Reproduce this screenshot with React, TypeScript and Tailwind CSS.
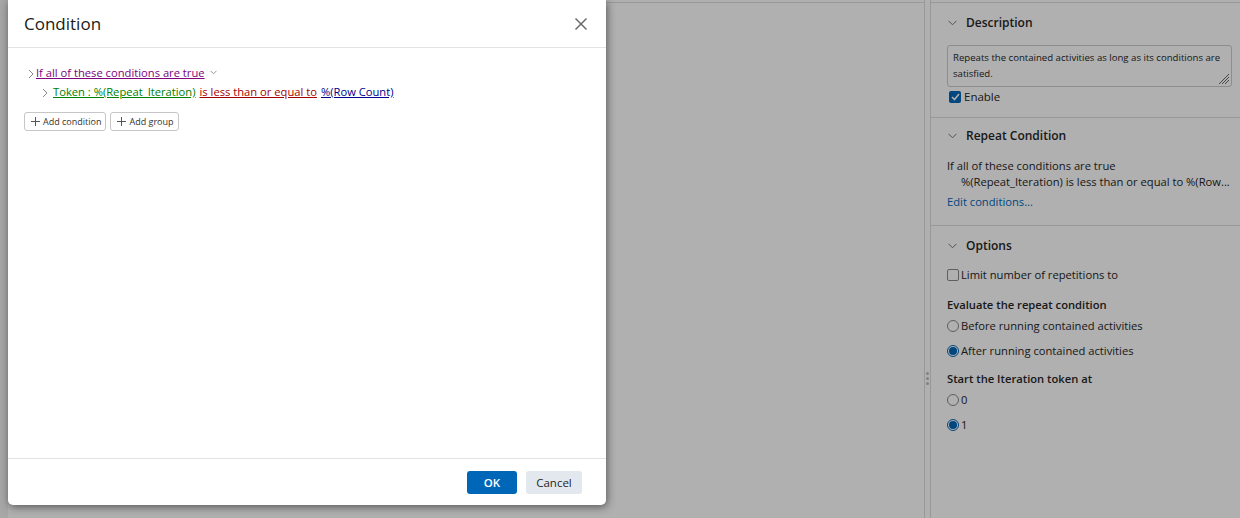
import React from "react";

const Chev = ({ className = "" }: { className?: string }) => (
  <svg width="9" height="6" viewBox="0 0 9 6" className={className} fill="none">
    <polyline points="0.5,0.8 4.5,4.8 8.5,0.8" stroke="#777" strokeWidth="1" />
  </svg>
);

const ChevRight = ({ className = "" }: { className?: string }) => (
  <svg width="6" height="10" viewBox="0 0 6 10" className={className} fill="none">
    <polyline points="1,1 5,5 1,9" stroke="#888" strokeWidth="1" />
  </svg>
);

const Plus = () => (
  <svg width="9" height="9" viewBox="0 0 9 9" fill="none">
    <line x1="4.5" y1="0" x2="4.5" y2="9" stroke="#555" strokeWidth="1" />
    <line x1="0" y1="4.5" x2="9" y2="4.5" stroke="#555" strokeWidth="1" />
  </svg>
);

const Radio = ({ checked }: { checked?: boolean }) =>
  checked ? (
    <span className="w-[12px] h-[12px] rounded-full border border-[#0067b8] flex items-center justify-center bg-white">
      <span className="w-[8px] h-[8px] rounded-full bg-[#0067b8]" />
    </span>
  ) : (
    <span className="w-[12px] h-[12px] rounded-full border border-[#8a8a8a] bg-white" />
  );

const SectionHeader = ({ title, h }: { title: string; h: string }) => (
  <div className={`flex items-center pl-[17px] ${h}`}>
    <Chev />
    <span className="ml-[9px] text-[12px] font-semibold text-[#262626]">{title}</span>
  </div>
);

export default function App() {
  return (
    <div className="relative w-[1240px] h-[518px] overflow-hidden bg-white font-['Open_Sans','Noto_Sans',sans-serif] text-[#262626]">
      <div className="flex h-full">
        <div className="w-[8px] bg-[#f2f2f2]" />
        <div className="flex-1 flex flex-col">
          <div className="h-[2px]" />
          <div className="flex-1 border-t border-[#dedede]" />
        </div>
        <div className="w-[7px] flex flex-col border-l border-r border-[#dcdcdc] bg-white">
          <div className="flex-1" />
          <div className="flex flex-col items-center gap-[2px] mb-[133px]">
            <span className="w-[3px] h-[3px] rounded-full bg-[#bbb]" />
            <span className="w-[3px] h-[3px] rounded-full bg-[#bbb]" />
            <span className="w-[3px] h-[3px] rounded-full bg-[#bbb]" />
          </div>
        </div>
        <div className="w-[309px] flex flex-col">
          <div className="h-[2px]" />
          <div className="border-t border-[#dedede] pb-[12px] border-b">
            <SectionHeader title="Description" h="h-[40px]" />
            <div className="ml-[16px] mr-[8px] mt-[2px] h-[42px] border border-[#cccccc] rounded-[3px] pl-[5px] pr-[4px] pt-[4px] text-[9.6px] leading-[16px] relative">
              Repeats the contained activities as long as its conditions are satisfied.
              <svg className="absolute right-[1px] bottom-[1px]" width="14" height="14" viewBox="0 0 14 14">
                <line x1="13" y1="3" x2="3" y2="13" stroke="#666" strokeWidth="1" />
                <line x1="13" y1="6" x2="6" y2="13" stroke="#666" strokeWidth="1" />
                <line x1="13" y1="9" x2="9" y2="13" stroke="#666" strokeWidth="1" />
              </svg>
            </div>
            <div className="mt-[2px] h-[16px] flex items-center pl-[18px]">
              <span className="w-[12px] h-[12px] rounded-[2px] bg-[#0067b8] flex items-center justify-center">
                <svg width="9" height="8" viewBox="0 0 9 8" fill="none">
                  <polyline points="1,4 3.5,6.5 8,1" stroke="white" strokeWidth="1.6" />
                </svg>
              </span>
              <span className="ml-[3px] text-[11.5px]">Enable</span>
            </div>
          </div>
          <div className="pb-[15px] border-b border-[#dedede]">
            <SectionHeader title="Repeat Condition" h="h-[36px]" />
            <div className="pl-[16px] mt-[4px] text-[11.2px] leading-[16px]">If all of these conditions are true</div>
            <div className="pl-[30px] text-[11.2px] leading-[16px] whitespace-nowrap overflow-hidden">
              %(Repeat_Iteration) is less than or equal to %(Row...
            </div>
            <div className="pl-[16px] mt-[4px] text-[11.2px] leading-[16px] text-[#0067b8]">Edit conditions...</div>
          </div>
          <div>
            <SectionHeader title="Options" h="h-[39px]" />
            <div className="pl-[16px] h-[20px] flex items-center text-[11.2px]">
              <span className="w-[12px] h-[12px] rounded-[2px] border border-[#8a8a8a] bg-white" />
              <span className="ml-[2px]">Limit number of repetitions to</span>
            </div>
            <div className="pl-[16px] mt-[12px] h-[16px] flex items-center text-[11.2px] font-semibold">
              Evaluate the repeat condition
            </div>
            <div className="pl-[16px] mt-[3px] h-[20px] flex items-center text-[11.2px]">
              <Radio />
              <span className="ml-[2px]">Before running contained activities</span>
            </div>
            <div className="pl-[16px] mt-[5px] h-[20px] flex items-center text-[11.2px]">
              <Radio checked />
              <span className="ml-[2px]">After running contained activities</span>
            </div>
            <div className="pl-[16px] mt-[10px] h-[16px] flex items-center text-[11.2px] font-semibold">
              Start the Iteration token at
            </div>
            <div className="pl-[16px] mt-[3px] h-[20px] flex items-center text-[11.2px]">
              <Radio />
              <span className="ml-[2px]">0</span>
            </div>
            <div className="pl-[16px] mt-[5px] h-[20px] flex items-center text-[11.2px]">
              <Radio checked />
              <span className="ml-[2px]">1</span>
            </div>
          </div>
        </div>
      </div>

      <div className="absolute inset-0 bg-black/[0.31]" />

      <div className="absolute left-[8px] top-0 w-[598px] h-[505px] bg-white rounded-b-[5px] shadow-[1px_2px_8px_rgba(0,0,0,0.5)] flex flex-col">
        <div className="h-[48px] border-b border-[#e3e3e3] flex items-center justify-between pl-[16px] pr-[19px]">
          <span className="text-[17px] font-[520] text-[#1a1a1a]">Condition</span>
          <svg width="12" height="12" viewBox="0 0 12 12">
            <line x1="0.5" y1="0.5" x2="11.5" y2="11.5" stroke="#666" strokeWidth="1.4" />
            <line x1="11.5" y1="0.5" x2="0.5" y2="11.5" stroke="#666" strokeWidth="1.4" />
          </svg>
        </div>
        <div className="flex-1 pl-[16px] pt-[16px]">
          <div className="flex items-center h-[19px] pl-[4px] text-[11.2px]">
            <ChevRight />
            <span className="ml-[2px] text-[#800080] underline">If all of these conditions are true</span>
            <svg className="ml-[5px] -mt-[3px]" width="7" height="5" viewBox="0 0 7 5" fill="none">
              <polyline points="0.5,0.8 3.5,3.8 6.5,0.8" stroke="#999" strokeWidth="1" />
            </svg>
          </div>
          <div className="flex items-center h-[19px] pl-[18px] text-[11.2px] whitespace-nowrap">
            <ChevRight />
            <span className="ml-[5px] text-[#008000] underline">Token : %(Repeat_Iteration)</span>
            <span className="ml-[4px] text-[#a50000] underline">is less than or equal to</span>
            <span className="ml-[4px] text-[#00008b] underline">%(Row Count)</span>
          </div>
          <div className="flex gap-[4px] mt-[10px]">
            <div className="h-[19px] pl-[6px] pr-[4px] border border-[#c6c6c6] rounded-[3px] flex items-center gap-[3px] text-[9px] text-[#333]">
              <Plus />
              <span>Add condition</span>
            </div>
            <div className="h-[19px] pl-[6px] pr-[4px] border border-[#c6c6c6] rounded-[3px] flex items-center gap-[3px] text-[9px] text-[#333]">
              <Plus />
              <span>Add group</span>
            </div>
          </div>
        </div>
        <div className="h-[47px] border-t border-[#e3e3e3] flex items-start justify-end pt-[12px] pr-[24px] gap-[9px]">
          <div className="w-[50px] h-[23px] rounded-[3px] bg-[#0067b8] text-white text-[11.5px] font-semibold flex items-center justify-center">OK</div>
          <div className="w-[56px] h-[23px] rounded-[3px] bg-[#e3e8ef] text-[#262626] text-[11.5px] flex items-center justify-center">Cancel</div>
        </div>
      </div>
    </div>
  );
}
